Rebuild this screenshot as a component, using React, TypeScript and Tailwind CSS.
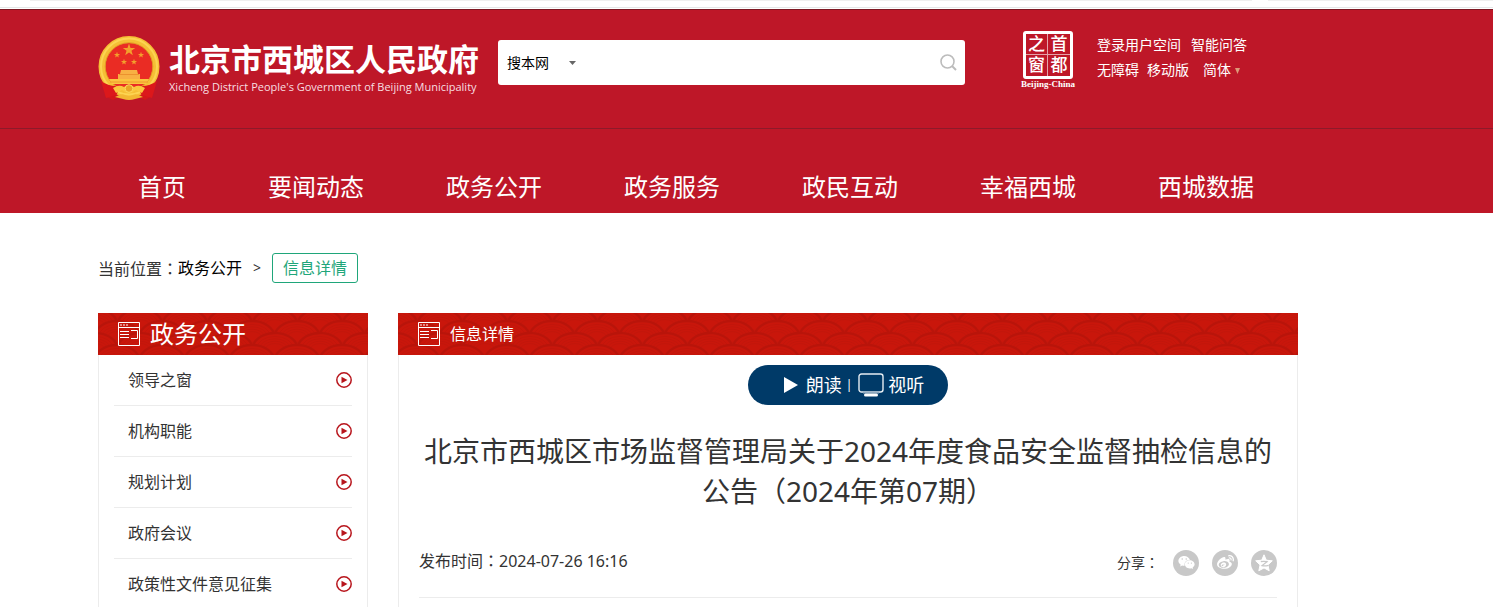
import { useId } from 'react'
import { FaWeixin, FaWeibo } from 'react-icons/fa'

const navItems = ['首页', '要闻动态', '政务公开', '政务服务', '政民互动', '幸福西城', '西城数据']

const sideItems = ['领导之窗', '机构职能', '规划计划', '政府会议', '政策性文件意见征集']

const waveRows = [
  { top: -17, xs: [-26, 19, 64] },
  { top: -5, xs: [-3, 42] },
  { top: 7, xs: [-26, 19, 64] },
  { top: 19, xs: [-3, 42] },
]

function WavePattern() {
  const id = useId()
  return (
    <svg className="absolute inset-0 w-full h-full" aria-hidden="true">
      <defs>
        <pattern id={id} width="45" height="24" patternUnits="userSpaceOnUse">
          <rect width="45" height="24" fill="#c9160b" />
          {waveRows.map((row) =>
            row.xs.map((x) => (
              <g key={`${row.top}-${x}`}>
                <ellipse cx={x} cy={row.top + 17} rx="22.5" ry="16" fill="#c9160b" stroke="#b9140a" strokeWidth="2.4" />
                <ellipse cx={x} cy={row.top + 17} rx="18.5" ry="12.6" fill="none" stroke="#c2150b" strokeWidth="1" />
                <ellipse cx={x} cy={row.top + 17} rx="15.5" ry="10.2" fill="none" stroke="#c2150b" strokeWidth="1" />
                <ellipse cx={x} cy={row.top + 17} rx="12.5" ry="7.8" fill="none" stroke="#c2150b" strokeWidth="1" />
                <ellipse cx={x} cy={row.top + 17} rx="9.5" ry="5.4" fill="none" stroke="#c2150b" strokeWidth="1" />
              </g>
            )),
          )}
        </pattern>
      </defs>
      <rect width="100%" height="100%" fill={`url(#${id})`} />
    </svg>
  )
}

function Star({ cx, cy, r }: { cx: number; cy: number; r: number }) {
  const points = Array.from({ length: 10 }, (_, i) => {
    const radius = i % 2 ? r * 0.4 : r
    const a = (Math.PI / 5) * i - Math.PI / 2
    return `${cx + radius * Math.cos(a)},${cy + radius * Math.sin(a)}`
  }).join(' ')
  return <polygon points={points} fill="#f3a02c" />
}

function Emblem() {
  return (
    <svg width="62" height="66" viewBox="0 0 62 66" className="shrink-0" aria-hidden="true">
      <path d="M8 48 L30 55 L54 48 L54 61 L47 65 L38 61 L31 65 L24 61 L15 65 L7 61 Z" fill="#d3171a" />
      <circle cx="31" cy="31.500" r="27" fill="#ea2c24" stroke="#f5bf35" strokeWidth="7" />
      <circle cx="31" cy="31.500" r="28" fill="none" stroke="#fcd452" strokeWidth="2" />
      <circle cx="31" cy="31.500" r="23.800" fill="none" stroke="#dd9422" strokeWidth="0.800" />
      <Star cx={31} cy={15} r={6.5} />
      <Star cx={19} cy={20} r={3.2} />
      <Star cx={43} cy={20} r={3.2} />
      <Star cx={26} cy={27} r={3.2} />
      <Star cx={36} cy={27} r={3.2} />
      <path d="M23 35 H39 L40 39 H42 V44 H20 V39 H22 Z" fill="#f8b043" />
      <path d="M21 39.500 H41" stroke="#e98a2a" strokeWidth="0.800" />
      <path d="M11 44 H51 L48 49 H14 Z" fill="#fbc440" />
      <path d="M12 47 H50" stroke="#ef8f28" strokeWidth="0.800" />
      <path d="M3 46 Q10 51 18 51 Q22 55 18 60 L8 63 Z" fill="#dc181b" />
      <path d="M59 46 Q52 51 44 51 Q40 55 44 60 L54 63 Z" fill="#dc181b" />
      <path d="M15 53 Q21 49 26 52 Q31 48 36 52 Q41 49 47 53 L44 58 L38 55 Q31 61 24 55 L18 58 Z" fill="#fbc73f" />
      <circle cx="31" cy="53.500" r="3.800" fill="#eaa326" stroke="#fbd95c" strokeWidth="1" />
      <path d="M17 62 Q24 58 27 60 Q31 62 35 60 Q38 58 45 62 L37 64 Q31 66 25 64 Z" fill="#f3b732" />
    </svg>
  )
}

function ColumnIcon() {
  return (
    <svg width="22" height="24" viewBox="0 0 22 24" fill="none" stroke="white" className="shrink-0" aria-hidden="true">
      <path d="M0.500 0.500 V23.500 H21.500 V0.500 Z M0 5.500 H22" />
      <path d="M2 3 H4 M5 3 H7 M8 3 H10" />
      <path d="M2 9.500 H11 M2 12.500 H11 M2 15.500 H11 M13 8.500 H19.500 V16.500 H13" />
    </svg>
  )
}

function PlayCircle() {
  return (
    <svg width="16" height="16" viewBox="0 0 16 16" className="shrink-0" aria-hidden="true">
      <circle cx="8" cy="8" r="7.200" fill="none" stroke="#b8151c" strokeWidth="1.500" />
      <path d="M5.500 4.800 L11.500 8 L5.500 11.200 Z" fill="#b8151c" />
    </svg>
  )
}

// the centred form of the full-width colon
function Colon() {
  return <span lang="zh-TW" className="font-['Noto_Sans_CJK_TC',sans-serif]">：</span>
}

function Header() {
  return (
    <header className="bg-[#be1728] border-t border-[#7d1822]">
      <div className="border-b border-[#8d1a2a]">
        <div className="w-full max-w-[1248px] ml-[98px] h-[118px] flex items-start">
          <a href="#" className="w-[400px] shrink-0 pt-[25px] flex items-start gap-[9px] text-white">
            <Emblem />
            <span className="flex flex-col whitespace-nowrap">
              <span className="text-[31px] leading-[48px] font-bold">北京市西城区人民政府</span>
              <span className="font-['Open_Sans',sans-serif] text-[11px] leading-4 -mt-1 font-medium text-[#f8dfe1]">
                Xicheng District People's Government of Beijing Municipality
              </span>
            </span>
          </a>
          <form className="w-[467px] h-[45px] mt-[30px] bg-white rounded-[3px] flex items-center shrink-0">
            <span className="relative flex items-center">
              <select aria-label="搜索范围" className="appearance-none w-[84px] pl-[9px] text-sm text-black bg-transparent outline-none">
                <option>搜本网</option>
              </select>
              <svg width="7" height="4" viewBox="0 0 7 4" className="absolute right-[6px] pointer-events-none" aria-hidden="true">
                <path d="M0 0 H7 L3.500 4 Z" fill="#666" />
              </svg>
            </span>
            <input type="text" aria-label="搜索" className="flex-1 min-w-0 h-full px-2 text-sm outline-none" />
            <button type="submit" aria-label="提交搜索" className="px-2">
              <svg width="17" height="17" viewBox="0 0 17 17" fill="none" stroke="#bcbcbc" strokeWidth="1.600">
                <circle cx="7.500" cy="7.500" r="6.500" />
                <path d="M12 12 L16 16" strokeWidth="2" />
              </svg>
            </button>
          </form>
          <a href="#" className="w-14 ml-[55px] mt-[21px] flex flex-col items-center shrink-0 text-white">
            <span className="w-[50px] h-12 border-3 border-white rounded-[3px] grid grid-cols-2 grid-rows-2 text-[17px] leading-5 font-medium text-center">
              <span className="border-r border-b border-white/60">之</span>
              <span className="border-b border-white/60">首</span>
              <span className="border-r border-white/60">窗</span>
              <span>都</span>
            </span>
            <span className="font-['Liberation_Serif',serif] font-bold text-[9px] leading-[10px] whitespace-nowrap">Beijing-China</span>
          </a>
          <div className="ml-[21px] mt-[22px] text-sm leading-[25px] text-white whitespace-nowrap">
            <div className="flex gap-[10px]">
              <a href="#">登录用户空间</a>
              <a href="#">智能问答</a>
            </div>
            <div className="flex gap-2">
              <a href="#">无障碍</a>
              <a href="#">移动版</a>
              <button type="button" className="ml-[6px] flex items-center gap-1">
                简体
                <svg width="5" height="6" viewBox="0 0 5 6" className="mt-[2px]" aria-hidden="true">
                  <path d="M0 0 H5 L2.500 6 Z" fill="#dd9a78" />
                </svg>
              </button>
            </div>
          </div>
        </div>
      </div>
      <nav className="max-w-[1200px] ml-[98px] h-[84px] pt-10">
        <ul className="pl-10 flex gap-[82px] text-2xl leading-9 text-white whitespace-nowrap">
          {navItems.map((item) => (
            <li key={item}>
              <a href="#">{item}</a>
            </li>
          ))}
        </ul>
      </nav>
    </header>
  )
}

function Sidebar() {
  return (
    <aside className="w-[270px] shrink-0 flex flex-col">
      <h2 className="relative h-[42px] pl-5 flex items-center gap-[10px] text-white text-2xl">
        <WavePattern />
        <span className="relative"><ColumnIcon /></span>
        <span className="relative leading-[42px]">政务公开</span>
      </h2>
      <ul className="flex-1 px-[15px] border-x border-[#ececec]">
        {sideItems.map((item) => (
          <li key={item} className="border-b border-[#ececec]">
            <a href="#" className="h-[50px] pl-[14px] flex items-center justify-between text-base text-[#333]">
              {item}
              <PlayCircle />
            </a>
          </li>
        ))}
      </ul>
    </aside>
  )
}

function Article() {
  return (
    <main className="flex-1 min-w-0 flex flex-col">
      <div className="relative h-[42px] pl-5 flex items-center gap-[10px] text-white text-base">
        <WavePattern />
        <span className="relative"><ColumnIcon /></span>
        <span className="relative">信息详情</span>
      </div>
      <div className="flex-1 px-5 pt-[10px] border-x border-[#ececec]">
        <div className="w-[200px] h-10 mx-auto pl-6 pr-3 rounded-full bg-[#003a68] flex items-center justify-center text-white text-lg whitespace-nowrap">
          <button type="button" className="flex items-center gap-2">
            <svg width="14" height="16" viewBox="0 0 14 16" aria-hidden="true">
              <path d="M0 0 L14 8 L0 16 Z" fill="white" />
            </svg>
            朗读
          </button>
          <span className="pl-1 pr-[6px] text-xs">|</span>
          <button type="button" className="flex items-center gap-1">
            <svg width="26" height="24" viewBox="0 0 26 24" fill="none" aria-hidden="true">
              <rect x="1" y="1" width="24" height="18" rx="2.500" stroke="#e6edf2" strokeWidth="1.400" />
              <path d="M5 19.500 H21" stroke="#8fa9be" strokeWidth="2" />
              <rect x="6" y="20.500" width="14" height="3" rx="1.500" fill="white" />
            </svg>
            视听
          </button>
        </div>
        <h1 className="mt-[26px] text-[28px] leading-10 text-center text-[#333]">
          北京市西城区市场监督管理局关于2024年度食品安全监督抽检信息的公告（2024年第07期）
        </h1>
        <div className="mt-[31px] pb-[18px] border-b border-[#ececec] flex items-start justify-between text-[#333]">
          <p className="text-base leading-9">发布时间<Colon />2024-07-26 16:16</p>
          <div className="pt-1 flex items-center">
            <span className="text-sm leading-8 mr-[14px]">分享<Colon /></span>
            <div className="flex gap-[13px]">
              <a href="#" aria-label="微信" className="size-[26px] rounded-full bg-[#c8c8c8] text-white flex items-center justify-center">
                <FaWeixin size={17} />
              </a>
              <a href="#" aria-label="微博" className="size-[26px] rounded-full bg-[#c8c8c8] text-white flex items-center justify-center">
                <FaWeibo size={17} />
              </a>
              <a href="#" aria-label="QQ空间" className="size-[26px] rounded-full bg-[#c8c8c8] flex items-center justify-center">
                <svg width="18" height="18" viewBox="0 0 18 18" aria-hidden="true">
                  <path d="M9 0.800 L11.300 6.200 L17.300 6.800 L12.900 10.900 L14.200 16.800 L9 13.900 L3.800 16.800 L5.100 10.900 L0.700 6.800 L6.700 6.200 Z" fill="white" stroke="white" strokeLinejoin="round" />
                  <path d="M5.800 7.600 Q9 7 12 7.700 L7 11.600 Q10 12.200 13.500 11.300" fill="none" stroke="#c8c8c8" strokeWidth="1.200" />
                </svg>
              </a>
            </div>
          </div>
        </div>
      </div>
    </main>
  )
}

export default function App() {
  return (
    <div lang="zh-CN" className="min-h-screen flex flex-col overflow-hidden bg-white font-['Noto_Sans','Noto_Sans_CJK_SC',sans-serif]">
      <div className="h-[9px] flex flex-col justify-between">
        <div className="flex gap-4 pl-[30px]">
          <div className="h-px w-[1222px] bg-[#efefef]" />
          <div className="h-px flex-1 bg-[#efefef]" />
        </div>
        <div className="h-px mb-px bg-[#e3e7e7]" />
      </div>
      <Header />
      <div className="w-full max-w-[1298px] pl-[98px] pt-10 flex-1 flex flex-col">
        <div className="flex items-center text-base text-[#333]">
          <span>当前位置<Colon /></span>
          <a href="#" className="text-black">政务公开</a>
          <span className="px-[11px] text-sm">&gt;</span>
          <a href="#" className="h-[30px] px-[10px] flex items-center border border-[#1fa67a] rounded-[3px] text-[#1fa67a]">信息详情</a>
        </div>
        <div className="mt-[30px] flex-1 flex gap-[30px]">
          <Sidebar />
          <Article />
        </div>
      </div>
    </div>
  )
}
